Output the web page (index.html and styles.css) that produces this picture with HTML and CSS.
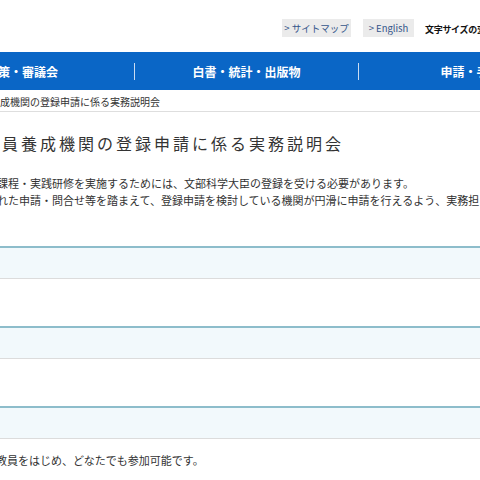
FILE: index.html
```html
<!DOCTYPE html>
<html lang="ja">
<head>
    <meta charset="UTF-8">
    <title>教員養成機関の登録申請に係る実務説明会</title>
    <link rel="stylesheet" href="styles.css">
</head>
<body>
    <div class="page">
        <div class="util">
            <a class="util_btn sitemap" href="#">&gt; サイトマップ</a>
            <a class="util_btn english" href="#">&gt; English</a>
            <span class="fontsize">文字サイズの変更</span>
        </div>

        <ul class="gnav">
            <li>政策・審議会</li>
            <li>白書・統計・出版物</li>
            <li>申請・手続</li>
            <li>文部科学省の紹介</li>
        </ul>

        <div class="crumb">教員養成機関の登録申請に係る実務説明会</div>

        <h1 class="title">教員養成機関の登録申請に係る実務説明会</h1>

        <p class="lead">
            指定の課程・実践研修を実施するためには、文部科学大臣の登録を受ける必要があります。<br>
            寄せられた申請・問合せ等を踏まえて、登録申請を検討している機関が円滑に申請を行えるよう、実務担当者向けの説明会を開催します。
        </p>

        <div class="section">
            <div class="sec_head"></div>
            <div class="sec_body"></div>
        </div>
        <div class="section">
            <div class="sec_head"></div>
            <div class="sec_body"></div>
        </div>
        <div class="section">
            <div class="sec_head"></div>
            <p class="note">大学の教員をはじめ、どなたでも参加可能です。</p>
        </div>
    </div>
</body>
</html>
```

FILE: styles.css
```css
*{
    margin: 0;
    padding: 0;
    box-sizing: border-box;
}
body{
    font-family: "Noto Sans CJK JP", "Noto Sans", sans-serif;
    color: #333;
    background: white;
    overflow: hidden;
}
.page{
    width: 1200px;
    margin-left: -90px;
}
.util{
    height: 52px;
    display: flex;
    align-items: center;
    padding-left: 372px;
    padding-top: 4px;
}
.util_btn{
    display: block;
    height: 18px;
    line-height: 18px;
    text-align: center;
    font-size: 9.5px;
    color: #34558a;
    text-decoration: none;
    background-color: #ebebeb;
}
.sitemap{
    width: 69px;
    margin-right: 12px;
}
.english{
    width: 51px;
    margin-right: 11px;
}
.fontsize{
    font-size: 9px;
    font-weight: bold;
    color: #111;
    letter-spacing: -0.3px;
    padding-top: 2px;
}
.gnav{
    list-style: none;
    display: flex;
    align-items: center;
    height: 38px;
    background-color: #0a66c6;
}
.gnav li{
    width: 224px;
    height: 17px;
    line-height: 17px;
    text-align: center;
    font-size: 12px;
    font-weight: bold;
    color: white;
}
.gnav li + li{
    border-left: 1px solid #c9dcf2;
}
.crumb{
    padding: 5px 0 2px 60px;
    height: 22px;
    line-height: 14px;
    font-size: 10px;
    border-bottom: 1px solid #dedede;
}
.title{
    margin-top: 19px;
    padding-left: 73px;
    line-height: 24px;
    font-size: 16px;
    font-weight: normal;
    letter-spacing: 3px;
    color: #333;
}
.lead{
    margin-top: 20px;
    padding-left: 54px;
    font-size: 11px;
    line-height: 17px;
    white-space: nowrap;
}
.lead + .section{
    margin-top: 37px;
}
.sec_head{
    height: 33px;
    border-top: 2px solid #8dbdcb;
    border-bottom: 1px solid #dcdcdc;
    background-color: #f2f9fc;
}
.sec_body{
    height: 47px;
}
.note{
    margin-top: 13px;
    padding-left: 53px;
    font-size: 11px;
    line-height: 17px;
}
```
